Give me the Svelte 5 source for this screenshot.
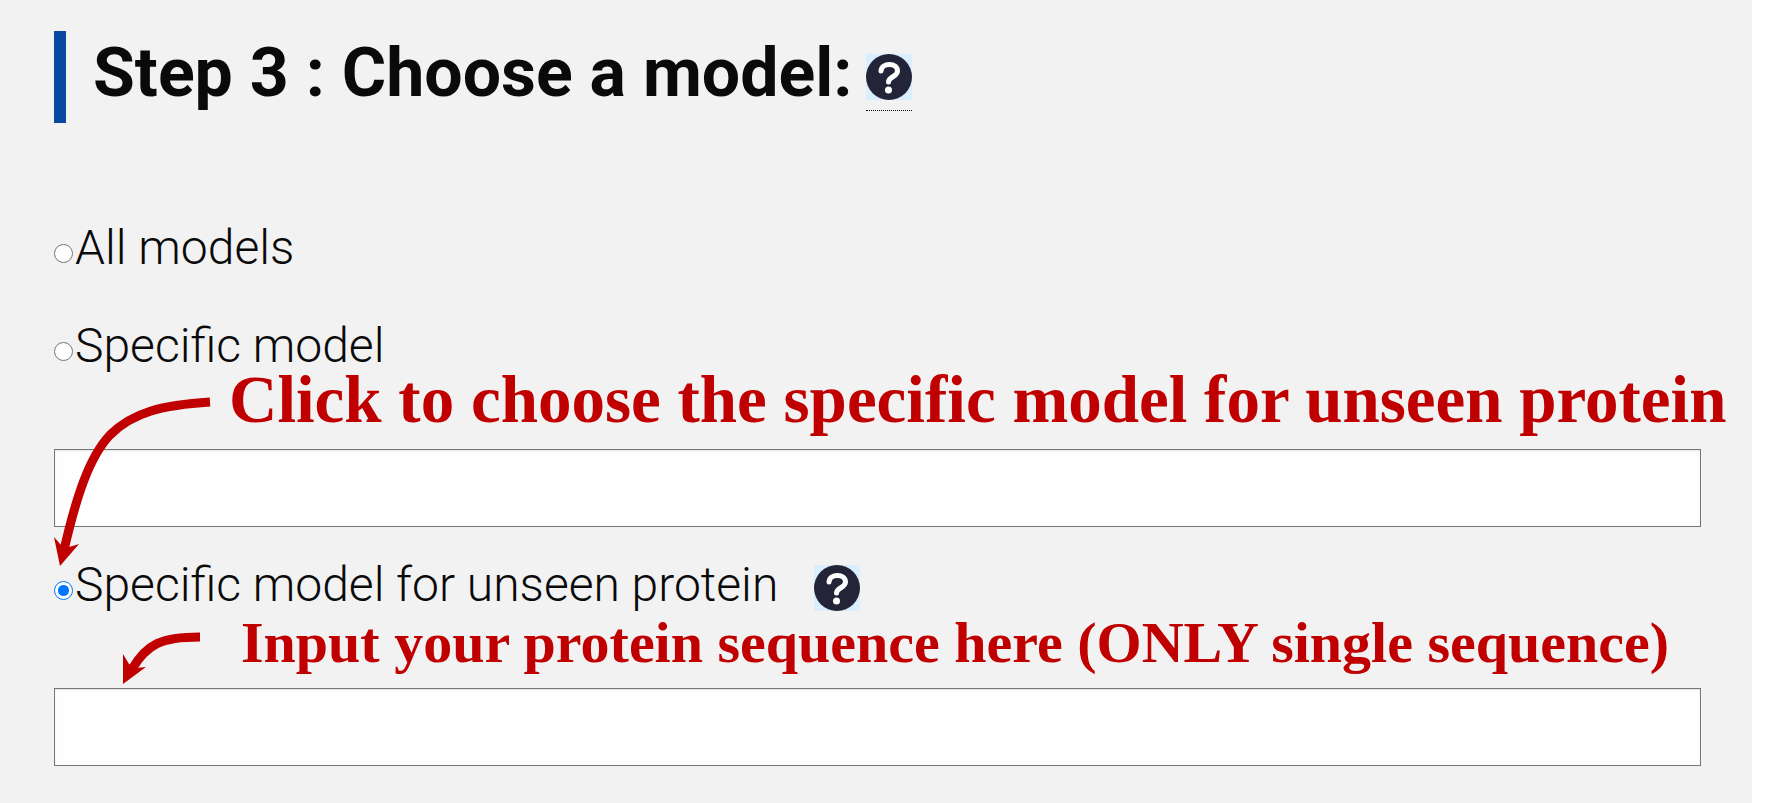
<script>
  let choice = $state('unseen');
  let specific = $state('');
  let sequence = $state('');
</script>

{#snippet help()}
  <svg viewBox="0 0 46 46" aria-hidden="true">
    <rect width="46" height="46" fill="#d9efff" />
    <circle cx="23" cy="23" r="23" fill="#242438" />
    <path d="M15 17C15.500 8.500 31.500 8 31.500 17C31.500 23 22.500 22.500 22.500 28" fill="none" stroke="#fff" stroke-width="5" stroke-linecap="round" stroke-linejoin="round" />
    <circle cx="22.500" cy="36" r="3.500" fill="#fff" />
  </svg>
{/snippet}

<main>
  <header>
    <h1>Step 3 : Choose a model:</h1>
    <button class="help dotted" type="button" aria-label="Help">{@render help()}</button>
  </header>

  <form>
    <div class="choice">
      <input id="all" type="radio" name="model" value="all" bind:group={choice} />
      <label for="all">All models</label>
    </div>

    <div class="choice">
      <input id="specific" type="radio" name="model" value="specific" bind:group={choice} />
      <label for="specific">Specific model</label>
    </div>
    <div class="note large">
      <svg class="arrow" width="160" height="190" viewBox="0 0 160 190" aria-hidden="true">
        <path d="M156 26C109 29 79 36 56 59C35 81 22 122 10 174" class="line" />
        <path d="M6 190L0 161L7 169L15 171L25 168Z" class="tip" />
      </svg>
      <p>Click to choose the specific model for unseen protein</p>
    </div>
    <input class="field" type="text" aria-label="Specific model" bind:value={specific} />

    <div class="choice below">
      <input id="unseen" type="radio" name="model" value="unseen" bind:group={choice} />
      <label for="unseen">Specific model for unseen protein</label>
      <button class="help spaced" type="button" aria-label="Help">{@render help()}</button>
    </div>
    <div class="note small">
      <svg class="arrow" width="160" height="72" viewBox="0 0 160 72" aria-hidden="true">
        <path d="M146 22C107 22 93 29 78 54" class="line" />
        <path d="M69 69L69 39L75 49L82 53L92 52Z" class="tip" />
      </svg>
      <p>Input your protein sequence here (ONLY single sequence)</p>
    </div>
    <input class="field" type="text" aria-label="Protein sequence" bind:value={sequence} />
  </form>
</main>

<style>
  :global(body) {
    margin: 0;
    background: #fff;
  }
  main {
    box-sizing: border-box;
    min-height: 100vh;
    margin-right: 17px;
    padding: 31px 51px 37px 54px;
    background: #f2f2f2;
    color: #0a0a0a;
    font-family: Roboto, "Open Sans", sans-serif;
  }
  header {
    display: flex;
    align-items: center;
    gap: 14px;
    height: 92px;
    padding-left: 27px;
    border-left: 12px solid #0848a0;
    margin-bottom: 95px;
  }
  h1 {
    margin: 0;
    padding-bottom: 8px;
    font-size: 68px;
    line-height: 80px;
    font-weight: 700;
    white-space: nowrap;
  }
  .help {
    flex: none;
    padding: 0;
    border: 0;
    background: none;
    cursor: help;
  }
  .help svg {
    display: block;
    width: 46px;
    height: 46px;
  }
  .dotted {
    padding: 10px 0;
    border-bottom: 1px dotted #0a0a0a;
  }
  .spaced {
    margin: 6px 0 0 36px;
  }
  .choice {
    display: flex;
    align-items: center;
    height: 60px;
    font-size: 48px;
    font-weight: 350;
    line-height: 60px;
    white-space: nowrap;
  }
  .choice + .choice {
    margin-top: 38px;
  }
  .below {
    margin-top: 28px;
  }
  .choice input {
    appearance: none;
    flex: none;
    box-sizing: border-box;
    width: 19px;
    height: 19px;
    margin: 10px 2px 0 0;
    border: 1px solid #767676;
    border-radius: 50%;
    background: #fff;
  }
  .choice input:checked {
    border-color: #0075ff;
    background: radial-gradient(circle, #0075ff 5px, #fff 6px);
  }
  .note {
    position: relative;
    height: 73px;
    color: #c00000;
    font-family: "Liberation Serif", serif;
    font-weight: 700;
    white-space: nowrap;
  }
  .note p {
    margin: 0;
  }
  .large p {
    margin: 0 -51px 0 175px;
    font-size: 67px;
    line-height: 46px;
  }
  .small p {
    padding-left: 187px;
    font-size: 58px;
    line-height: 56px;
  }
  .arrow {
    position: absolute;
    top: 0;
    left: 0;
    overflow: visible;
    pointer-events: none;
  }
  .line {
    fill: none;
    stroke: #c00000;
    stroke-width: 9;
  }
  .tip {
    fill: #c00000;
  }
  .field {
    display: block;
    box-sizing: border-box;
    width: 100%;
    height: 78px;
    padding: 8px 16px;
    border: 1px solid #767676;
    border-radius: 0;
    background: #fefefe;
    box-shadow: inset 0 1px 2px #0a0a0a1a;
    font: 300 48px Roboto, sans-serif;
  }
</style>
